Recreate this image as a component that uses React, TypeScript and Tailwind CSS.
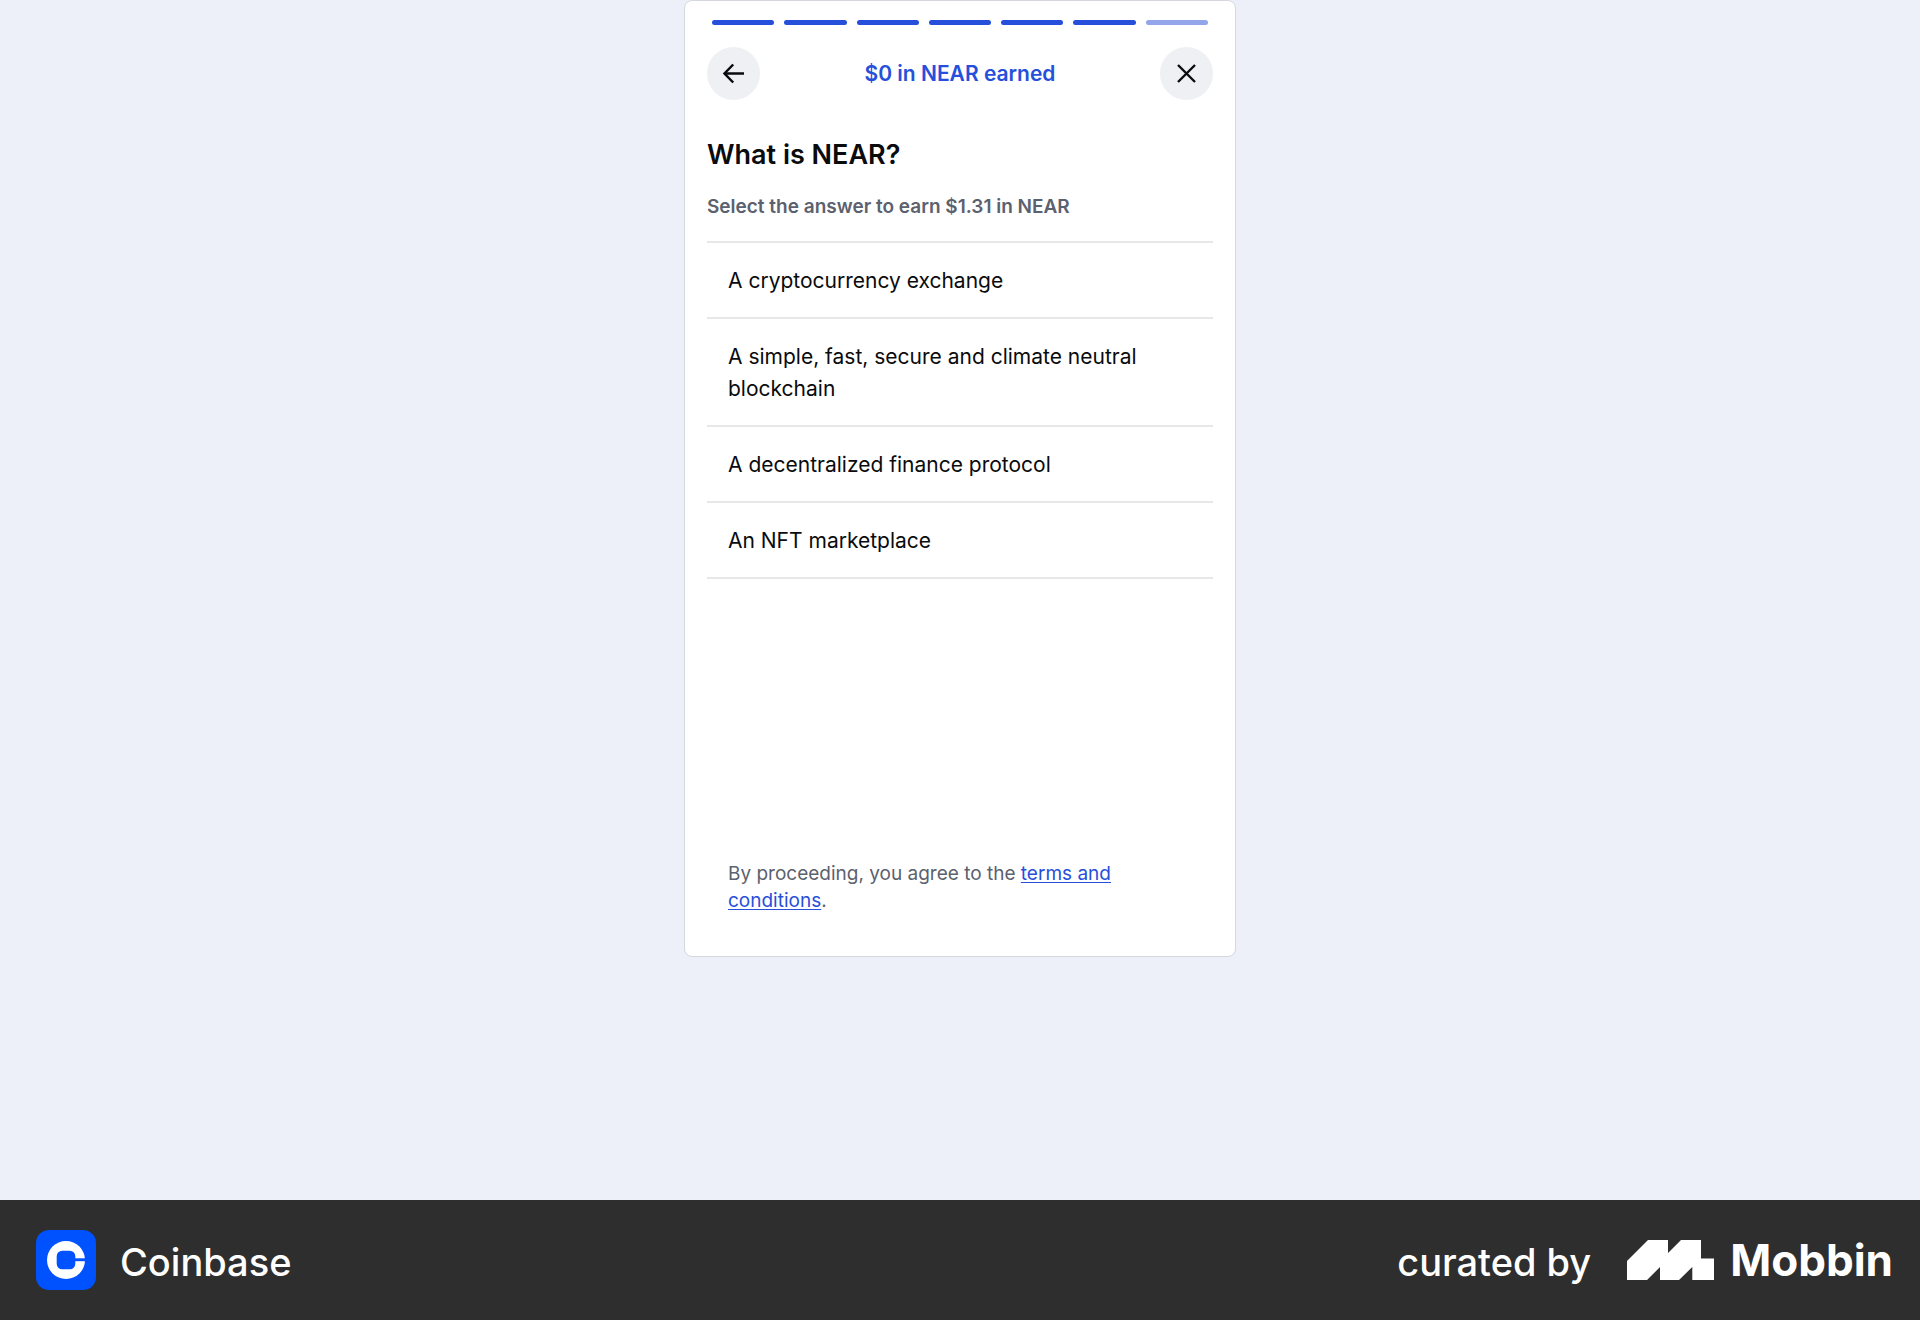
const STEPS = 7;
const CURRENT_STEP = 6;

const ANSWERS = [
  "A cryptocurrency exchange",
  "A simple, fast, secure and climate neutral blockchain",
  "A decentralized finance protocol",
  "An NFT marketplace",
];

function ArrowLeftIcon() {
  return (
    <svg width="23" height="23" viewBox="0 0 23 23" fill="none" stroke="currentColor" strokeWidth="2.5" aria-hidden="true">
      <path d="M11.2 2.5 2.5 11.5l8.700 9" />
      <path d="M2.500 11.500h19.500" />
    </svg>
  );
}

function CloseIcon() {
  return (
    <svg width="23" height="23" viewBox="0 0 23 23" fill="none" stroke="currentColor" strokeWidth="2.4" aria-hidden="true">
      <path d="M3 3 20 20M20 3 3 20" />
    </svg>
  );
}

function CoinbaseLogo() {
  return (
    <svg width="60" height="60" viewBox="0 0 60 60" aria-hidden="true">
      <rect width="60" height="60" rx="13" fill="#0052ff" />
      <circle cx="30" cy="30" r="19" fill="#fff" />
      <rect x="20.700" y="20.700" width="18.600" height="18.600" rx="5.500" fill="#0052ff" />
      <rect x="38" y="28.300" width="12" height="2.900" fill="#0052ff" />
    </svg>
  );
}

function MobbinLogo() {
  return (
    <svg width="87" height="40" viewBox="0 0 87 40" fill="#fff" aria-hidden="true">
      <path d="M21 0H41V13L54 0H74V18.500H87V40H65.300V27L52 40H33V27L20 40H0V21Z" />
    </svg>
  );
}

function ProgressBar() {
  return (
    <div
      role="progressbar"
      aria-label="Quiz progress"
      aria-valuemin={0}
      aria-valuemax={STEPS}
      aria-valuenow={CURRENT_STEP}
      className="flex gap-[10px] px-[5px]"
    >
      {Array.from({ length: STEPS }, (_, i) => (
        <span
          key={i}
          className={i < CURRENT_STEP ? "h-[5px] flex-1 rounded-full bg-[#264fdb]" : "h-[5px] flex-1 rounded-full bg-[#93a6ec]"}
        />
      ))}
    </div>
  );
}

function QuizCard() {
  return (
    <main className="mx-auto flex min-h-[957px] w-full max-w-[552px] flex-col rounded-lg border border-[#d4d7dd] bg-white px-[22px] pt-[19px] pb-[42px]">
      <ProgressBar />
      <header className="mt-[22px] flex items-center justify-between">
        <button type="button" aria-label="Back" className="flex size-[53px] items-center justify-center rounded-full bg-[#eef0f3]">
          <ArrowLeftIcon />
        </button>
        <p className="text-[21px] leading-[32px] font-semibold text-[#264fdb]">$0 in NEAR earned</p>
        <button type="button" aria-label="Close" className="flex size-[53px] items-center justify-center rounded-full bg-[#eef0f3]">
          <CloseIcon />
        </button>
      </header>
      <h1 className="mt-[37px] text-[27px] leading-[36px] font-semibold">What is NEAR?</h1>
      <p className="mt-[20px] text-[19px] leading-[28px] font-semibold text-[#5b616e]">Select the answer to earn $1.31 in NEAR</p>
      <ul className="mt-[20px] border-t-2 border-[#e6e7e9]">
        {ANSWERS.map((answer) => (
          <li key={answer} className="border-b-2 border-[#e6e7e9]">
            <button type="button" className="block w-full px-[21px] pt-[22px] pb-[20px] text-left text-[21px] leading-[32px]">
              {answer}
            </button>
          </li>
        ))}
      </ul>
      <p className="mt-auto px-[21px] text-[19px] leading-[27px] text-[#5b616e]">
        By proceeding, you agree to the{" "}
        <a href="#terms" className="text-[#264fdb] underline underline-offset-2">
          terms and conditions
        </a>
        .
      </p>
    </main>
  );
}

export default function App() {
  return (
    <div className="flex min-h-screen flex-col bg-[#edf0f9] font-['Inter',sans-serif] text-[#0a0b0d]">
      <div className="flex-1">
        <QuizCard />
      </div>
      <footer className="flex h-[120px] items-center justify-between bg-[#2e2e2e] pr-[27px] pl-[36px] text-white">
        <div className="flex items-center gap-[24px]">
          <CoinbaseLogo />
          <span className="pt-[3px] text-[38px] leading-[48px] font-medium">Coinbase</span>
        </div>
        <div className="flex items-center">
          <span className="pt-[3px] text-[38px] leading-[48px] font-medium">curated by</span>
          <span className="ml-[36px] flex items-center gap-[16px]">
            <MobbinLogo />
            <span className="text-[44px] leading-[48px] font-bold">Mobbin</span>
          </span>
        </div>
      </footer>
    </div>
  );
}
